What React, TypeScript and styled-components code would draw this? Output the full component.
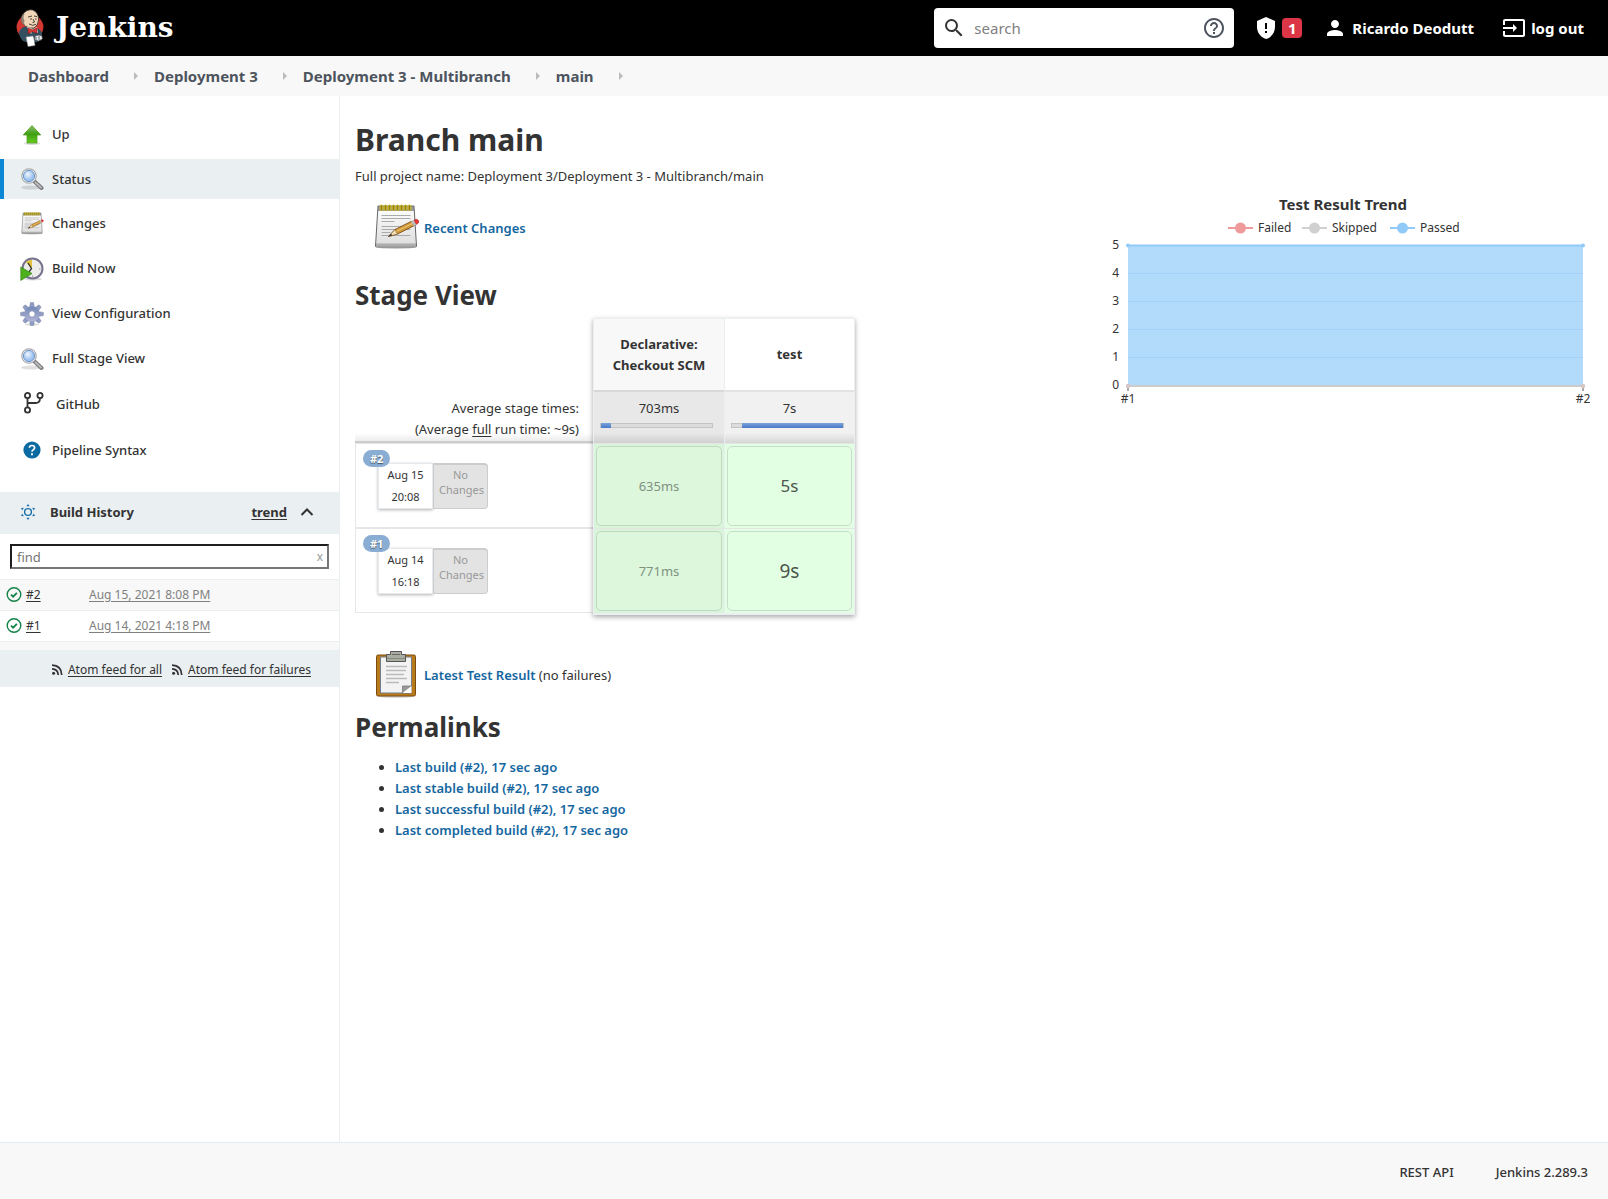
import React from "react";
import styled, { createGlobalStyle } from "styled-components";

const Global = createGlobalStyle`
  *, *::before, *::after { box-sizing: border-box; }
  body {
    margin: 0;
    background: #fff;
    color: #333;
    font-family: "Noto Sans", "Open Sans", sans-serif;
    font-size: 13px;
    line-height: 21px;
  }
  a { color: inherit; text-decoration: none; }
  h1, h2, p, ul, dl { margin: 0; padding: 0; }
  button, input { font-family: inherit; }
`;

const Page = styled.div`
  min-height: 100vh;
  display: flex;
  flex-direction: column;
`;

/* ---------- header ---------- */

const Header = styled.header`
  height: 56px;
  background: #000;
  color: #fff;
  display: flex;
  align-items: center;
  padding: 0 24px 0 14px;
  font-size: 15px;
  font-weight: 700;
`;

const Brand = styled.a`
  display: flex;
  align-items: center;
  gap: 10px;
  margin-right: auto;
  font-family: "DejaVu Serif", Georgia, serif;
  font-size: 28px;
  line-height: 40px;
`;

const SearchBox = styled.form`
  display: flex;
  align-items: center;
  gap: 6px;
  width: 300px;
  height: 40px;
  padding: 0 8px;
  border-radius: 4px;
  background: #fff;
  color: #333;
`;

const SearchInput = styled.input`
  flex: 1;
  min-width: 0;
  border: 0;
  outline: 0;
  background: transparent;
  font-size: 15px;
  color: #333;
  &::placeholder { color: #808080; }
`;

const PlainButton = styled.button`
  display: flex;
  align-items: center;
  padding: 0;
  border: 0;
  background: none;
  color: inherit;
  cursor: pointer;
`;

const HeaderLink = styled.a<{ $gap: number; $before: number }>`
  display: flex;
  align-items: center;
  gap: ${(p) => p.$gap}px;
  margin-left: ${(p) => p.$before}px;
`;

const AlertCount = styled.span`
  width: 20px;
  height: 20px;
  border-radius: 4px;
  background: #dc3545;
  text-align: center;
  line-height: 20px;
`;

const Crumbs = styled.nav`
  height: 40px;
  background: #f8f8f8;
  padding-left: 28px;
  color: #4d545d;
  font-size: 15px;
  font-weight: 700;
  ul { display: flex; list-style: none; height: 100%; }
  li { display: flex; align-items: center; }
`;

const CrumbArrow = styled.span`
  margin: 0 16px 0 25px;
  border-left: 4px solid #bbb;
  border-top: 4px solid transparent;
  border-bottom: 4px solid transparent;
`;

/* ---------- side panel ---------- */

const Body = styled.div`
  flex: 1;
  display: flex;
`;

const Side = styled.aside`
  width: 340px;
  flex: none;
  padding-top: 18px;
  border-right: 1px solid #eaeff2;
`;

const Tasks = styled.ul`
  display: flex;
  flex-direction: column;
  gap: 4px;
  list-style: none;
`;

const Task = styled.a<{ $active?: boolean; $tall?: boolean; $wide?: boolean }>`
  display: flex;
  align-items: center;
  gap: ${(p) => (p.$wide ? 12 : 8)}px;
  height: ${(p) => (p.$active ? 40 : p.$tall ? 42 : 41)}px;
  padding-left: 16px;
  border-left: 4px solid ${(p) => (p.$active ? "#0b87d6" : "transparent")};
  background: ${(p) => (p.$active ? "#eaeff2" : "transparent")};
  font-weight: 500;
`;

const History = styled.section`
  margin-top: 21px;
`;

const HistoryHead = styled.div`
  display: flex;
  align-items: center;
  height: 42px;
  padding: 0 25px 2px 20px;
  background: #eaeff2;
  font-weight: 700;
  h2 { font-size: 13px; margin: 0 auto 0 14px; }
  a { text-decoration: underline; text-underline-offset: 2px; margin-right: 13px; }
`;

const FilterBar = styled.div`
  padding: 10px;
  display: grid;
`;

const FilterInput = styled.input`
  grid-area: 1 / 1;
  height: 25px;
  padding: 0 5px;
  border: 2px solid;
  border-color: #1e1e1e #767676 #767676 #1e1e1e;
  outline: 0;
  font-size: 13px;
  &::placeholder { color: #757575; }
`;

const ClearButton = styled(PlainButton)`
  grid-area: 1 / 1;
  justify-self: end;
  margin-right: 6px;
  color: #999;
  font-size: 12px;
`;

const Builds = styled.table`
  width: 100%;
  border-collapse: collapse;
  font-size: 12px;
  tr { border-top: 1px solid #eaeff2; border-bottom: 1px solid #eaeff2; }
  tr:nth-child(odd) { background: #f8f8f8; }
  td { height: 31px; padding: 0 0 2px; }
  a { text-decoration: underline; text-underline-offset: 2px; }
`;

const BuildNo = styled.td`
  width: 89px;
  div { display: flex; align-items: center; gap: 4px; padding-left: 6px; }
`;

const BuildDate = styled.td`
  color: #808080;
`;

const Feeds = styled.div`
  display: flex;
  align-items: center;
  justify-content: flex-end;
  gap: 10px;
  height: 45px;
  padding: 1px 28px 0 0;
  border-top: 8px solid #f8f8f8;
  background: #eaeff2;
  font-size: 12px;
  a { display: flex; align-items: center; gap: 5px; }
  a span { text-decoration: underline; text-underline-offset: 2px; }
`;

/* ---------- main panel ---------- */

const Main = styled.main`
  flex: 1;
  min-width: 0;
  padding: 25px 15px 20px;
  display: flex;
  justify-content: space-between;
`;

const Content = styled.div`
  display: flex;
  flex-direction: column;
  align-items: flex-start;
`;

const Title = styled.h1`
  font-size: 30px;
  line-height: 38px;
  font-weight: 700;
`;

const ProjectName = styled.p`
  margin-top: 7px;
`;

const SubTitle = styled.h2`
  font-size: 26px;
  line-height: 36px;
  font-weight: 700;
`;

const SummaryLine = styled.p<{ $top: number; $bottom: number }>`
  display: flex;
  align-items: center;
  gap: 4px;
  margin: ${(p) => p.$top}px 0 ${(p) => p.$bottom}px 17px;
  a { color: #1466a0; font-weight: 600; }
`;

const Stages = styled.table`
  border-collapse: separate;
  border-spacing: 0;
  margin-top: 5px;
  th, td { padding: 0; }
`;

const Corner = styled.td`
  width: 238px;
`;

const AverageLabel = styled.td`
  && { padding: 8px 14px 0 0; }
  height: 53px;
  border-bottom: 2px solid #ccc;
  background: linear-gradient(to top, #ececec, #fff 8px);
  text-align: right;
  vertical-align: top;
  u { text-underline-offset: 2px; }
`;

const StageHead = styled.th<{ $shade?: boolean }>`
  width: 131px;
  height: 72px;
  border: solid #eaeff2;
  border-width: ${(p) => (p.$shade ? "1px 0 0 1px" : "1px 1px 0")};
  background: ${(p) => (p.$shade ? "#f8f8f8" : "#fff")};
  font-weight: 700;
`;

const StageAverage = styled.td<{ $shade?: boolean }>`
  height: 53px;
  border-top: 2px solid ${(p) => (p.$shade ? "#d8d8d8" : "#e3e3e3")};
  border-left: 1px solid #eaeff2;
  border-right: ${(p) => (p.$shade ? 0 : 1)}px solid #eaeff2;
  background: ${(p) =>
    p.$shade
      ? "linear-gradient(to top, #d0d0d0, #e8e8e8 10px)"
      : "linear-gradient(to top, #d6d6d6, #f1f1f1 10px)"};
  text-align: center;
  vertical-align: top;
  div { line-height: 32px; height: 31px; }
`;

const Meter = styled.span`
  display: flex;
  height: 5px;
  width: 113px;
  margin-left: 6px;
  border: 1px solid #c4c4c4;
  background: #dcdcdc;
  i { display: block; height: 5px; margin-top: -1px; background: linear-gradient(#7aa3d6, #4a78cc); }
`;

const RunCell = styled.td`
  border: 1px solid #e6e6e6;
  border-right: 0;
  height: 85px;
  vertical-align: top;
`;

const Run = styled.div`
  display: grid;
  grid-template-columns: 15px 55px 55px;
  grid-template-rows: 13px 46px;
  margin: 6px 0 0 7px;
  font-size: 11px;
  text-align: center;
`;

const RunBadge = styled.a`
  grid-area: 1 / 1 / 2 / 3;
  justify-self: start;
  z-index: 1;
  height: 17px;
  padding: 0 7px;
  border-radius: 9px;
  background: #8aadd4;
  color: #fff;
  font-weight: 700;
  line-height: 17px;
  text-shadow: 0 1px 1px #456;
`;

const RunDate = styled.div`
  grid-area: 2 / 2;
  border: 1px solid #e4eaee;
  background: #fff;
  box-shadow: 0 1px 3px rgba(0, 0, 0, 0.3);
  line-height: 22px;
`;

const RunChanges = styled.div`
  grid-area: 2 / 3;
  padding: 2px 5px;
  border: 1px solid #ccc;
  border-top-width: 2px;
  border-radius: 0 4px 4px 0;
  background: #e3e3e3;
  color: #999;
  line-height: 15px;
`;

const StageCell = styled.td<{ $shade?: boolean }>`
  && { padding: 2px; }
  height: 85px;
  border-top: 1px solid #e3e6e3;
  border-left: 1px solid #eaeff2;
  border-right: ${(p) => (p.$shade ? 0 : 1)}px solid #eaeff2;
  background: ${(p) => (p.$shade ? "#d9f5d9" : "#e3ffe3")};
`;

const StageTime = styled.div<{ $shade?: boolean; $size: number }>`
  height: 80px;
  border: 1px solid ${(p) => (p.$shade ? "#c2d6c4" : "#c8dccb")};
  border-radius: 5px;
  background: ${(p) => (p.$shade ? "#ddf7dd" : "#e3ffe3")};
  color: ${(p) => (p.$shade ? "#809180" : "#4d554d")};
  font-size: ${(p) => p.$size}px;
  line-height: 78px;
  text-align: center;
`;

const StageShadow = styled.div`
  display: grid;
  padding-bottom: 2px;
  > * { grid-area: 1 / 1; }
  &::after {
    content: "";
    grid-area: 1 / 1;
    margin: 5px 0 -2px 238px;
    box-shadow: 0 2px 5px rgba(0, 0, 0, 0.35);
    border-bottom: 2px solid #eaeff2;
    pointer-events: none;
  }
`;

const Permalinks = styled.ul`
  margin-top: 12px;
  padding-left: 40px;
  a { color: #1466a0; font-weight: 600; }
`;

const Trend = styled.figure`
  flex: none;
  width: 500px;
  margin: 73px 0 0;
  svg { display: block; }
`;

const Footer = styled.footer`
  display: flex;
  align-items: center;
  justify-content: flex-end;
  gap: 42px;
  height: 57px;
  padding: 3px 20px 0;
  border-top: 1px solid #e2ebef;
  background: #f8f8f8;
  font-weight: 500;
`;

/* ---------- drawings ---------- */

const JenkinsLogo = () => (
  <svg width="32" height="40" viewBox="0 0 32 40" aria-hidden="true">
    <ellipse cx="16" cy="19" rx="13.4" ry="12.500" fill="#d33833" />
    <path d="M5 24 Q8 18 13 19 L20 20 Q26 20 28 25 L28 32 Q18 37 9 33 Q5 29 5 24Z" fill="#335061" />
    <path d="M9 6 Q13 .8 19 2 Q25 5 24.500 12 Q24 18 20 20 Q15 21 11 18 Q8 15 7.500 12 Q7 9 9 6Z" fill="#f0d6b7" stroke="#222" strokeWidth=".7" />
    <path d="M9 6 Q6 10 8 15 L11 18 Q9.500 14 10.500 12 Q8.500 10 10.500 6Z" fill="#8f8272" />
    <path d="M14 9l4-1M20 8l3 .6M16 11h2M21 11h1.500M19 11l1.500 3-2 .5M15 16q4 2.500 7 .3" stroke="#222" strokeWidth=".8" fill="none" />
    <path d="M13 19l4 7 2-4 5 3-1-6-4 2z" fill="#fff" />
    <path d="M14 20l4.500 1.800 4.500-2v5.500l-4.500-1.600-4.500 2z" fill="#d33833" stroke="#811" strokeWidth=".5" />
    <path d="M12 29l7-1 1 3 1 6.500-7 1z" fill="#fff" stroke="#888" strokeWidth=".5" />
    <path d="M21 28q4-2 7 0l.5 3-4 2-4-1z" fill="#e8e8e8" stroke="#333" strokeWidth=".6" />
    <path d="M22 29v3M25 28v4" stroke="#335061" strokeWidth=".8" />
  </svg>
);

const SearchIcon = () => (
  <svg width="24" height="24" viewBox="0 0 24 24" aria-hidden="true">
    <path fill="currentColor" d="M15.500 14h-.79l-.28-.27A6.470 6.470 0 0 0 16 9.500 6.500 6.500 0 1 0 9.500 16c1.610 0 3.090-.59 4.230-1.570l.27.28v.79l5 4.990L20.490 19l-4.990-5zm-6 0C7.010 14 5 11.990 5 9.500S7.010 5 9.500 5 14 7.010 14 9.500 11.990 14 9.500 14z" />
  </svg>
);

const HelpIcon = () => (
  <svg width="24" height="24" viewBox="0 0 24 24" aria-hidden="true">
    <path fill="#4d545d" d="M11 18h2v-2h-2v2zm1-16C6.480 2 2 6.480 2 12s4.480 10 10 10 10-4.480 10-10S17.520 2 12 2zm0 18c-4.410 0-8-3.590-8-8s3.590-8 8-8 8 3.590 8 8-3.590 8-8 8zm0-14c-2.210 0-4 1.790-4 4h2c0-1.100.9-2 2-2s2 .9 2 2c0 2-3 1.750-3 5h2c0-2.250 3-2.500 3-5 0-2.210-1.790-4-4-4z" />
  </svg>
);

const ShieldIcon = () => (
  <svg width="20" height="24" viewBox="0 0 20 24" aria-hidden="true">
    <path fill="#fff" d="M10 1l9 4v6c0 5.550-3.840 10.740-9 12-5.160-1.260-9-6.450-9-12V5z" />
    <path stroke="#000" strokeWidth="2" d="M10 7v6M10 15v2" />
  </svg>
);

const PersonIcon = () => (
  <svg width="24" height="24" viewBox="0 0 24 24" aria-hidden="true">
    <path fill="#fff" d="M12 12c2.210 0 4-1.790 4-4s-1.790-4-4-4-4 1.790-4 4 1.790 4 4 4zm0 2c-2.670 0-8 1.340-8 4v2h16v-2c0-2.660-5.330-4-8-4z" />
  </svg>
);

const LogoutIcon = () => (
  <svg width="24" height="24" viewBox="0 0 24 24" aria-hidden="true">
    <path fill="#fff" d="M21 3.010H3c-1.100 0-2 .9-2 2V9h2V4.990h18v14.030H3V15H1v4.010c0 1.100.9 1.980 2 1.980h18c1.100 0 2-.88 2-1.980v-14c0-1.110-.9-2-2-2zM11 16l4-4-4-4v3H1v2h10v3z" />
  </svg>
);

const UpIcon = () => (
  <svg width="24" height="24" viewBox="0 0 24 24" aria-hidden="true">
    <defs>
      <linearGradient id="up" x1="0" y1="0" x2="0" y2="1">
        <stop offset="0" stopColor="#8ac06a" />
        <stop offset=".5" stopColor="#3f9f12" />
        <stop offset="1" stopColor="#66cc22" />
      </linearGradient>
    </defs>
    <ellipse cx="12" cy="20.500" rx="8" ry="1.500" fill="#000" opacity=".15" />
    <path d="M12 2.500l8.800 9.500H17v8H7v-8H3.200z" fill="url(#up)" stroke="#4a9a1c" strokeWidth=".7" />
  </svg>
);

const MagnifierIcon = () => (
  <svg width="24" height="24" viewBox="0 0 24 24" aria-hidden="true">
    <defs>
      <radialGradient id="lens" cx=".4" cy=".35">
        <stop offset="0" stopColor="#eef5ff" />
        <stop offset="1" stopColor="#9cc1ee" />
      </radialGradient>
    </defs>
    <ellipse cx="11" cy="20.500" rx="10" ry="2" fill="#000" opacity=".12" />
    <path d="M14.500 14.500l7 6.500" stroke="#777" strokeWidth="4" strokeLinecap="round" />
    <path d="M15.500 15.500l5.500 5" stroke="#b9b9b9" strokeWidth="2" strokeLinecap="round" />
    <circle cx="9" cy="9" r="7.200" fill="#fff" stroke="#aaa" strokeWidth="1.200" />
    <circle cx="9" cy="9" r="5.600" fill="url(#lens)" stroke="#6a94cc" strokeWidth="1" />
  </svg>
);

const NotepadIcon = ({ size }: { size: number }) => (
  <svg width={size} height={size} viewBox="-1 2 48 48" aria-hidden="true">
    <defs>
      <linearGradient id="pad" x1="0" y1="0" x2="0" y2="1">
        <stop offset="0" stopColor="#fff" />
        <stop offset="1" stopColor="#dcdcdc" />
      </linearGradient>
    </defs>
    <ellipse cx="23" cy="45.500" rx="18" ry="1.500" fill="#000" opacity=".2" />
    <path d="M5 4h36l2.500 40q0 1-1 1H3.500q-1 0-1-1z" fill="url(#pad)" stroke="#666" strokeWidth="1" />
    <path d="M5 4h36v5H5z" fill="#777" opacity=".75" />
    <path d="M3 41.500h40v3H3z" fill="#999" opacity=".7" />
    <path d="M8.500 13.500h29M8.500 16.500h29M8.500 19.500h13M8.500 24.500h20M8.500 27.500h29M8.500 30.500h9M8.500 33.500h29" stroke="#aaa" />
    {[8, 12, 16, 20, 24, 28, 32, 36].map((x) => (
      <rect key={x} x={x - 0.8} y="3" width="2.600" height="5.500" rx="1.300" fill="#8a7a20" stroke="#d8c020" strokeWidth="1" />
    ))}
    <path d="M15.500 34.500l6.500-7 17-8.500 2.500 4.500-17 8.500z" fill="#d39a3a" stroke="#6b4410" strokeWidth=".8" />
    <path d="M23 29.500l16.500-8.200" stroke="#f0c878" strokeWidth="1" />
    <path d="M15.500 34.500l6.500-7 2.500 4.500z" fill="#f3dfb8" stroke="#6b4410" strokeWidth=".5" />
    <path d="M15.500 34.500l2.500-2.800 1.200 1.600z" fill="#222" />
    <path d="M38 19.500l3-1.500 2.500 4.500-3 1.500z" fill="#bbb" />
    <path d="M41 18q3-1.800 4.500.6 1.200 2.400-2 3.900z" fill="#e33" stroke="#a22" strokeWidth=".5" />
  </svg>
);

const BuildNowIcon = () => (
  <svg width="24" height="24" viewBox="0 0 24 24" aria-hidden="true">
    <ellipse cx="13" cy="22" rx="9" ry="1.500" fill="#000" opacity=".15" />
    <circle cx="12.500" cy="11.500" r="10" fill="#ececea" stroke="#77738e" strokeWidth="2" />
    <path d="M12 12L6 5q3-2.500 6-2z" fill="#e0c23c" />
    <path d="M8 6l3.500 5.500L9 15" stroke="#333" strokeWidth="1.300" fill="none" />
    <path d="M19 12h1.500M12.500 18.500V20" stroke="#999" />
    <path d="M.8 10v13.500L12 16.500z" fill="#4cb01c" stroke="#3a8a14" strokeWidth=".7" />
  </svg>
);

const GearIcon = () => (
  <svg width="24" height="24" viewBox="0 0 24 24" aria-hidden="true">
    <defs>
      <linearGradient id="gear" x1="0" y1="0" x2="0" y2="1">
        <stop offset="0" stopColor="#6f88b4" />
        <stop offset="1" stopColor="#b4b6d6" />
      </linearGradient>
    </defs>
    <ellipse cx="12" cy="22.500" rx="7" ry="1.200" fill="#000" opacity=".15" />
    <g fill="#8f9cc4" stroke="#7f86ab" strokeWidth=".5">
      {[0, 45, 90, 135, 180, 225, 270, 315].map((a) => (
        <path key={a} d="M10.400 .6h3.200l1 6H9.400z" transform={`rotate(${a} 12 12)`} />
      ))}
    </g>
    <circle cx="12" cy="12" r="7.500" fill="url(#gear)" />
    <circle cx="12" cy="12" r="3.200" fill="#fff" stroke="#8088b0" strokeWidth=".8" />
  </svg>
);

const BranchIcon = () => (
  <svg width="24" height="24" viewBox="0 0 24 24" fill="none" stroke="#333" aria-hidden="true">
    <g strokeWidth="1.800">
      <circle cx="7.500" cy="3.500" r="2.600" />
      <circle cx="20" cy="3.500" r="2.600" />
      <circle cx="7.500" cy="18" r="2.600" />
      <path d="M7.500 6.200v9M20 6.200q0 4.800-4.500 4.800h-8" />
    </g>
  </svg>
);

const QuestionIcon = () => (
  <svg width="24" height="24" viewBox="0 0 24 24" aria-hidden="true">
    <circle cx="12" cy="12" r="8.600" fill="#0b6aa2" />
    <path d="M9.400 9.800q0-2.300 2.600-2.300t2.600 2.200q0 1.300-1.300 2T12 13.800" stroke="#fff" strokeWidth="1.700" fill="none" />
    <path d="M11 15.300h2v2h-2z" fill="#fff" />
  </svg>
);

const SunIcon = () => (
  <svg width="16" height="16" viewBox="0 0 16 16" aria-hidden="true">
    <circle cx="8" cy="8" r="3.400" fill="none" stroke="#1a6fa8" strokeWidth="1.400" />
    {[0, 60, 120, 180, 240, 300].map((a) => (
      <path key={a} d="M8 0l1.600 2.200H6.400z" fill="#1a6fa8" transform={`rotate(${a} 8 8)`} />
    ))}
  </svg>
);

const CaretIcon = () => (
  <svg width="14" height="10" viewBox="0 0 14 10" aria-hidden="true">
    <path d="M1.500 8L7 2.500 12.500 8" fill="none" stroke="#333" strokeWidth="2" />
  </svg>
);

const CheckIcon = () => (
  <svg width="16" height="16" viewBox="0 0 16 16" fill="none" stroke="#138347" aria-label="Success">
    <circle cx="8" cy="8.500" r="6.800" strokeWidth="1.400" />
    <path d="M5 8.700l2.100 2 3.800-3.800" strokeWidth="1.800" />
  </svg>
);

const FeedIcon = () => (
  <svg width="11" height="11" viewBox="0 0 11 11" fill="none" stroke="#333" strokeWidth="1.700" aria-hidden="true">
    <path d="M0 1.200q9.500.3 9.700 9.800M0 4.800q6 .2 6.200 6.200" />
    <circle cx="1.600" cy="9.300" r="1.500" fill="#333" stroke="none" />
  </svg>
);

const ClipboardIcon = () => (
  <svg width="48" height="48" viewBox="0 1 48 48" aria-hidden="true">
    <ellipse cx="24" cy="46.500" rx="17" ry="1.300" fill="#000" opacity=".2" />
    <rect x="4.500" y="5" width="39" height="41" rx="1.500" fill="#bb7b1c" stroke="#7a4c0c" />
    <path d="M8.500 7h31v36h-31z" fill="#f3f3f3" stroke="#6f7d88" />
    <path d="M14 16.500h21M14 20.500h20M14 24.500h18M14 28.500h21M14 32.500h13" stroke="#bbb" strokeWidth="1.600" />
    <path d="M30.500 36h9v7h-9z" fill="#999" stroke="#777" strokeWidth=".8" />
    <path d="M39.500 36v7h-9z" fill="#fff" />
    <path d="M14.500 4.500h4v-3h11v3h4v7h-19z" fill="#a9aca0" stroke="#555" />
    <path d="M15 8.500h18" stroke="#86897e" />
    <path d="M20 4.500h8" stroke="#666" />
  </svg>
);

const legend = [
  { label: "Failed", color: "#ef9a9a", x: 135 },
  { label: "Skipped", color: "#d0d0d0", x: 209 },
  { label: "Passed", color: "#90caf9", x: 297 },
];

const TrendChart = () => (
  <svg width="500" height="214" viewBox="0 0 500 214" role="img" aria-label="Test Result Trend" fontSize="12" fill="#333">
    <text x="250" y="16" fontSize="15" fontWeight="700" textAnchor="middle">Test Result Trend</text>
    {legend.map((l) => (
      <g key={l.label}>
        <path d={`M${l.x} 34h25`} stroke={l.color} strokeWidth="2" />
        <circle cx={l.x + 12.5} cy="34" r="5.500" fill={l.color} />
        <text x={l.x + 30} y="38">{l.label}</text>
      </g>
    ))}
    <rect x="35" y="51" width="455" height="141" fill="#b1dafb" />
    {[0, 1, 2, 3, 4, 5].map((n) => (
      <g key={n}>
        {n > 0 && n < 5 && <path d={`M35 ${191.5 - n * 28}h455`} stroke="#a4d1f9" />}
        <text x="26" y={195 - n * 28} textAnchor="end">{n}</text>
      </g>
    ))}
    <path d="M35 51.500h455" stroke="#90caf9" strokeWidth="2" />
    <path d="M35 192v5M490 192v5" stroke="#555" />
    <path d="M35 192h455" stroke="#cfcaca" strokeWidth="2" />
    <circle cx="35" cy="51.500" r="2" fill="#90caf9" />
    <circle cx="490" cy="51.500" r="2" fill="#90caf9" />
    <circle cx="35" cy="192" r="2.200" fill="#d6c6c6" />
    <circle cx="490" cy="192" r="2.200" fill="#d6c6c6" />
    <text x="35" y="209" textAnchor="middle">#1</text>
    <text x="490" y="209" textAnchor="middle">#2</text>
  </svg>
);

/* ---------- data ---------- */

const crumbs = ["Dashboard", "Deployment 3", "Deployment 3 - Multibranch", "main"];

const tasks = [
  { label: "Up", icon: <UpIcon /> },
  { label: "Status", icon: <MagnifierIcon />, active: true },
  { label: "Changes", icon: <NotepadIcon size={24} /> },
  { label: "Build Now", icon: <BuildNowIcon /> },
  { label: "View Configuration", icon: <GearIcon /> },
  { label: "Full Stage View", icon: <MagnifierIcon /> },
  { label: "GitHub", icon: <BranchIcon />, tall: true, wide: true },
  { label: "Pipeline Syntax", icon: <QuestionIcon />, tall: true },
];

const builds = [
  { no: "#2", date: "Aug 15, 2021 8:08 PM" },
  { no: "#1", date: "Aug 14, 2021 4:18 PM" },
];

const runs = [
  { no: "#2", day: "Aug 15", time: "20:08", checkout: "635ms", test: "5s", size: 17 },
  { no: "#1", day: "Aug 14", time: "16:18", checkout: "771ms", test: "9s", size: 19 },
];

const permalinks = [
  "Last build (#2), 17 sec ago",
  "Last stable build (#2), 17 sec ago",
  "Last successful build (#2), 17 sec ago",
  "Last completed build (#2), 17 sec ago",
];

export default function App() {
  return (
    <Page>
      <Global />
      <Header>
        <Brand href="#"><JenkinsLogo />Jenkins</Brand>
        <SearchBox onSubmit={(e) => e.preventDefault()}>
          <SearchIcon />
          <SearchInput aria-label="search" placeholder="search" />
          <PlainButton type="button" aria-label="Help"><HelpIcon /></PlainButton>
        </SearchBox>
        <HeaderLink href="#" $gap={6} $before={22} aria-label="Security warnings">
          <ShieldIcon /><AlertCount>1</AlertCount>
        </HeaderLink>
        <HeaderLink href="#" $gap={5} $before={21}><PersonIcon />Ricardo Deodutt</HeaderLink>
        <HeaderLink href="#" $gap={5} $before={28}><LogoutIcon />log out</HeaderLink>
      </Header>
      <Crumbs aria-label="Breadcrumb">
        <ul>
          {crumbs.map((c) => (
            <li key={c}><a href="#">{c}</a><CrumbArrow /></li>
          ))}
        </ul>
      </Crumbs>
      <Body>
        <Side>
          <Tasks>
            {tasks.map((t) => (
              <li key={t.label}>
                <Task href="#" $active={t.active} $tall={t.tall} $wide={t.wide}>{t.icon}{t.label}</Task>
              </li>
            ))}
          </Tasks>
          <History>
            <HistoryHead>
              <SunIcon />
              <h2>Build History</h2>
              <a href="#">trend</a>
              <PlainButton type="button" aria-label="Collapse"><CaretIcon /></PlainButton>
            </HistoryHead>
            <FilterBar>
              <FilterInput aria-label="find" placeholder="find" />
              <ClearButton type="button" aria-label="Clear">x</ClearButton>
            </FilterBar>
            <Builds>
              <tbody>
                {builds.map((b) => (
                  <tr key={b.no}>
                    <BuildNo><div><CheckIcon /><a href="#">{b.no}</a></div></BuildNo>
                    <BuildDate><a href="#">{b.date}</a></BuildDate>
                  </tr>
                ))}
              </tbody>
            </Builds>
            <Feeds>
              <a href="#"><FeedIcon /><span>Atom feed for all</span></a>
              <a href="#"><FeedIcon /><span>Atom feed for failures</span></a>
            </Feeds>
          </History>
        </Side>
        <Main>
          <Content>
            <Title>Branch main</Title>
            <ProjectName>Full project name: Deployment 3/Deployment 3 - Multibranch/main</ProjectName>
            <SummaryLine $top={17} $bottom={25}>
              <NotepadIcon size={48} /><a href="#">Recent Changes</a>
            </SummaryLine>
            <SubTitle>Stage View</SubTitle>
            <StageShadow>
              <Stages>
                <tbody>
                  <tr>
                    <Corner />
                    <StageHead $shade>Declarative:<br />Checkout SCM</StageHead>
                    <StageHead>test</StageHead>
                  </tr>
                  <tr>
                    <AverageLabel>Average stage times:<br />(Average <u>full</u> run time: ~9s)</AverageLabel>
                    <StageAverage $shade>
                      <div>703ms</div>
                      <Meter><i style={{ width: "9%" }} /></Meter>
                    </StageAverage>
                    <StageAverage>
                      <div>7s</div>
                      <Meter><i style={{ width: "91%", marginLeft: "9%" }} /></Meter>
                    </StageAverage>
                  </tr>
                  {runs.map((r) => (
                    <tr key={r.no}>
                      <RunCell>
                        <Run>
                          <RunBadge href="#">{r.no}</RunBadge>
                          <RunDate>{r.day}<br />{r.time}</RunDate>
                          <RunChanges>No<br />Changes</RunChanges>
                        </Run>
                      </RunCell>
                      <StageCell $shade><StageTime $shade $size={13}>{r.checkout}</StageTime></StageCell>
                      <StageCell><StageTime $size={r.size}>{r.test}</StageTime></StageCell>
                    </tr>
                  ))}
                </tbody>
              </Stages>
            </StageShadow>
            <SummaryLine $top={36} $bottom={10}>
              <ClipboardIcon /><span><a href="#">Latest Test Result</a> (no failures)</span>
            </SummaryLine>
            <SubTitle>Permalinks</SubTitle>
            <Permalinks>
              {permalinks.map((p) => (
                <li key={p}><a href="#">{p}</a></li>
              ))}
            </Permalinks>
          </Content>
          <Trend><TrendChart /></Trend>
        </Main>
      </Body>
      <Footer>
        <a href="#">REST API</a>
        <a href="#">Jenkins 2.289.3</a>
      </Footer>
    </Page>
  );
}
